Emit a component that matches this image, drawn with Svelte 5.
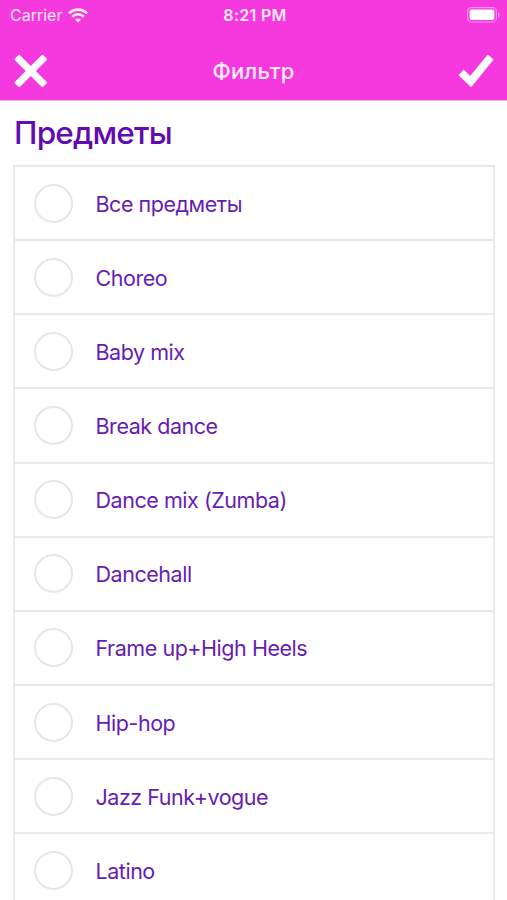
<script lang="ts">
  const subjects = [
    "Все предметы",
    "Choreo",
    "Baby mix",
    "Break dance",
    "Dance mix (Zumba)",
    "Dancehall",
    "Frame up+High Heels",
    "Hip-hop",
    "Jazz Funk+vogue",
    "Latino",
  ];

  let selected = $state<string[]>([]);

  function toggle(name: string) {
    if (selected.includes(name)) selected = selected.filter((s) => s !== name);
    else selected = [...selected, name];
  }
  function clear() {
    selected = [];
  }
</script>

<div class="screen">
  <header>
    <div class="status">
      <div class="carrier">
        <span>Carrier</span>
        <svg width="20" height="15" viewBox="0 0 20 15" fill="none" stroke="#fff" stroke-width="2.6">
          <path d="M1 5.4C6.2 .4 13.8 .4 19 5.4" />
          <path d="M4.2 8.9c3.5-3.3 8.1-3.3 11.6 0" />
          <path d="M7 11.6c1.8-1.6 4.2-1.6 6 0l-3 3z" fill="#fff" stroke="none" />
        </svg>
      </div>
      <div class="time">8:21 PM</div>
      <svg class="battery" width="33" height="16" viewBox="0 0 33 16">
        <rect x=".6" y=".6" width="28.8" height="14.4" rx="4" fill="none" stroke="#fff" stroke-opacity=".45" stroke-width="1.2" />
        <rect x="2.6" y="2.6" width="24.8" height="10.4" rx="2.2" fill="#fff" />
        <path d="M31 5.5c2 .8 2 3.8 0 4.6z" fill="#fff" fill-opacity=".5" />
      </svg>
    </div>
    <div class="navbar">
      <button aria-label="Закрыть" onclick={clear}>
        <svg width="36" height="36" viewBox="0 0 36 36" fill="#fff">
          <rect x="-2.2" y="14.4" width="40" height="7.2" rx="1.2" transform="rotate(45 17.8 18)" />
          <rect x="-2.2" y="14.4" width="40" height="7.2" rx="1.2" transform="rotate(-45 17.8 18)" />
        </svg>
      </button>
      <h1>Фильтр</h1>
      <button aria-label="Применить">
        <svg width="36" height="36" viewBox="0 0 36 36" fill="#fff" stroke="#fff" stroke-width="1.4" stroke-linejoin="round">
          <path d="M1.5 22.2L5.6 17.6l6.7 6.4L29.8 2.6l4.9 3.9L13 33.2z" />
        </svg>
      </button>
    </div>
  </header>

  <main>
    <h2>Предметы</h2>
    <ul>
      {#each subjects as name}
        <li>
          <button class="row" onclick={() => toggle(name)}>
            <span class="radio" class:on={selected.includes(name)}></span>
            <span class="label">{name}</span>
          </button>
        </li>
      {/each}
    </ul>
  </main>
</div>

<style>
  :global(body) {
    background: #fff;
    overflow: hidden;
  }
  .screen {
    width: 507px;
    height: 900px;
    overflow: hidden;
    font-family: Inter, "Noto Sans", sans-serif;
    color: #661cb5;
  }
  header {
    height: 101px;
    box-sizing: border-box;
    background: #f638df;
    color: #fff;
    border-bottom: 1px solid #fbb3f3;
  }
  .status {
    display: grid;
    grid-template-columns: 1fr auto 1fr;
    align-items: center;
    height: 30px;
    padding: 0 7px 0 10px;
    font-size: 16px;
  }
  .carrier {
    display: flex;
    align-items: center;
    gap: 6px;
    opacity: 0.9;
  }
  .time {
    font-weight: 600;
    letter-spacing: 0.3px;
    opacity: 0.9;
  }
  .battery {
    justify-self: end;
  }
  .navbar {
    display: flex;
    align-items: center;
    justify-content: space-between;
    height: 70px;
    padding: 12px 13px 0;
    box-sizing: border-box;
  }
  button {
    display: flex;
    padding: 0;
    border: none;
    background: none;
    color: inherit;
    font: inherit;
  }
  h1 {
    margin: 0;
    font-size: 22px;
    font-weight: 500;
    letter-spacing: 0.2px;
    opacity: 0.9;
  }
  h2 {
    box-sizing: border-box;
    margin: 0;
    padding: 12px 14px 0;
    height: 52px;
    line-height: 40px;
    font-size: 31.5px;
    font-weight: 500;
    letter-spacing: -0.8px;
    color: #610bb1;
  }
  ul {
    list-style: none;
    margin: 12px 12px 0 13px;
    padding: 0;
    border: 2px solid #e9e9e9;
  }
  li {
    height: 74.15px;
    box-sizing: border-box;
    border-bottom: 2px solid #e9e9e9;
  }
  .row {
    align-items: center;
    width: 100%;
    height: 100%;
    gap: 22.5px;
    padding-left: 19px;
  }
  .radio {
    width: 39px;
    height: 39px;
    box-sizing: border-box;
    border: 2px solid #e6e6e6;
    border-radius: 50%;
  }
  .radio.on {
    background: #661cb5;
  }
  .label {
    padding-top: 1px;
    font-size: 21.5px;
    letter-spacing: -0.46px;
  }
</style>
